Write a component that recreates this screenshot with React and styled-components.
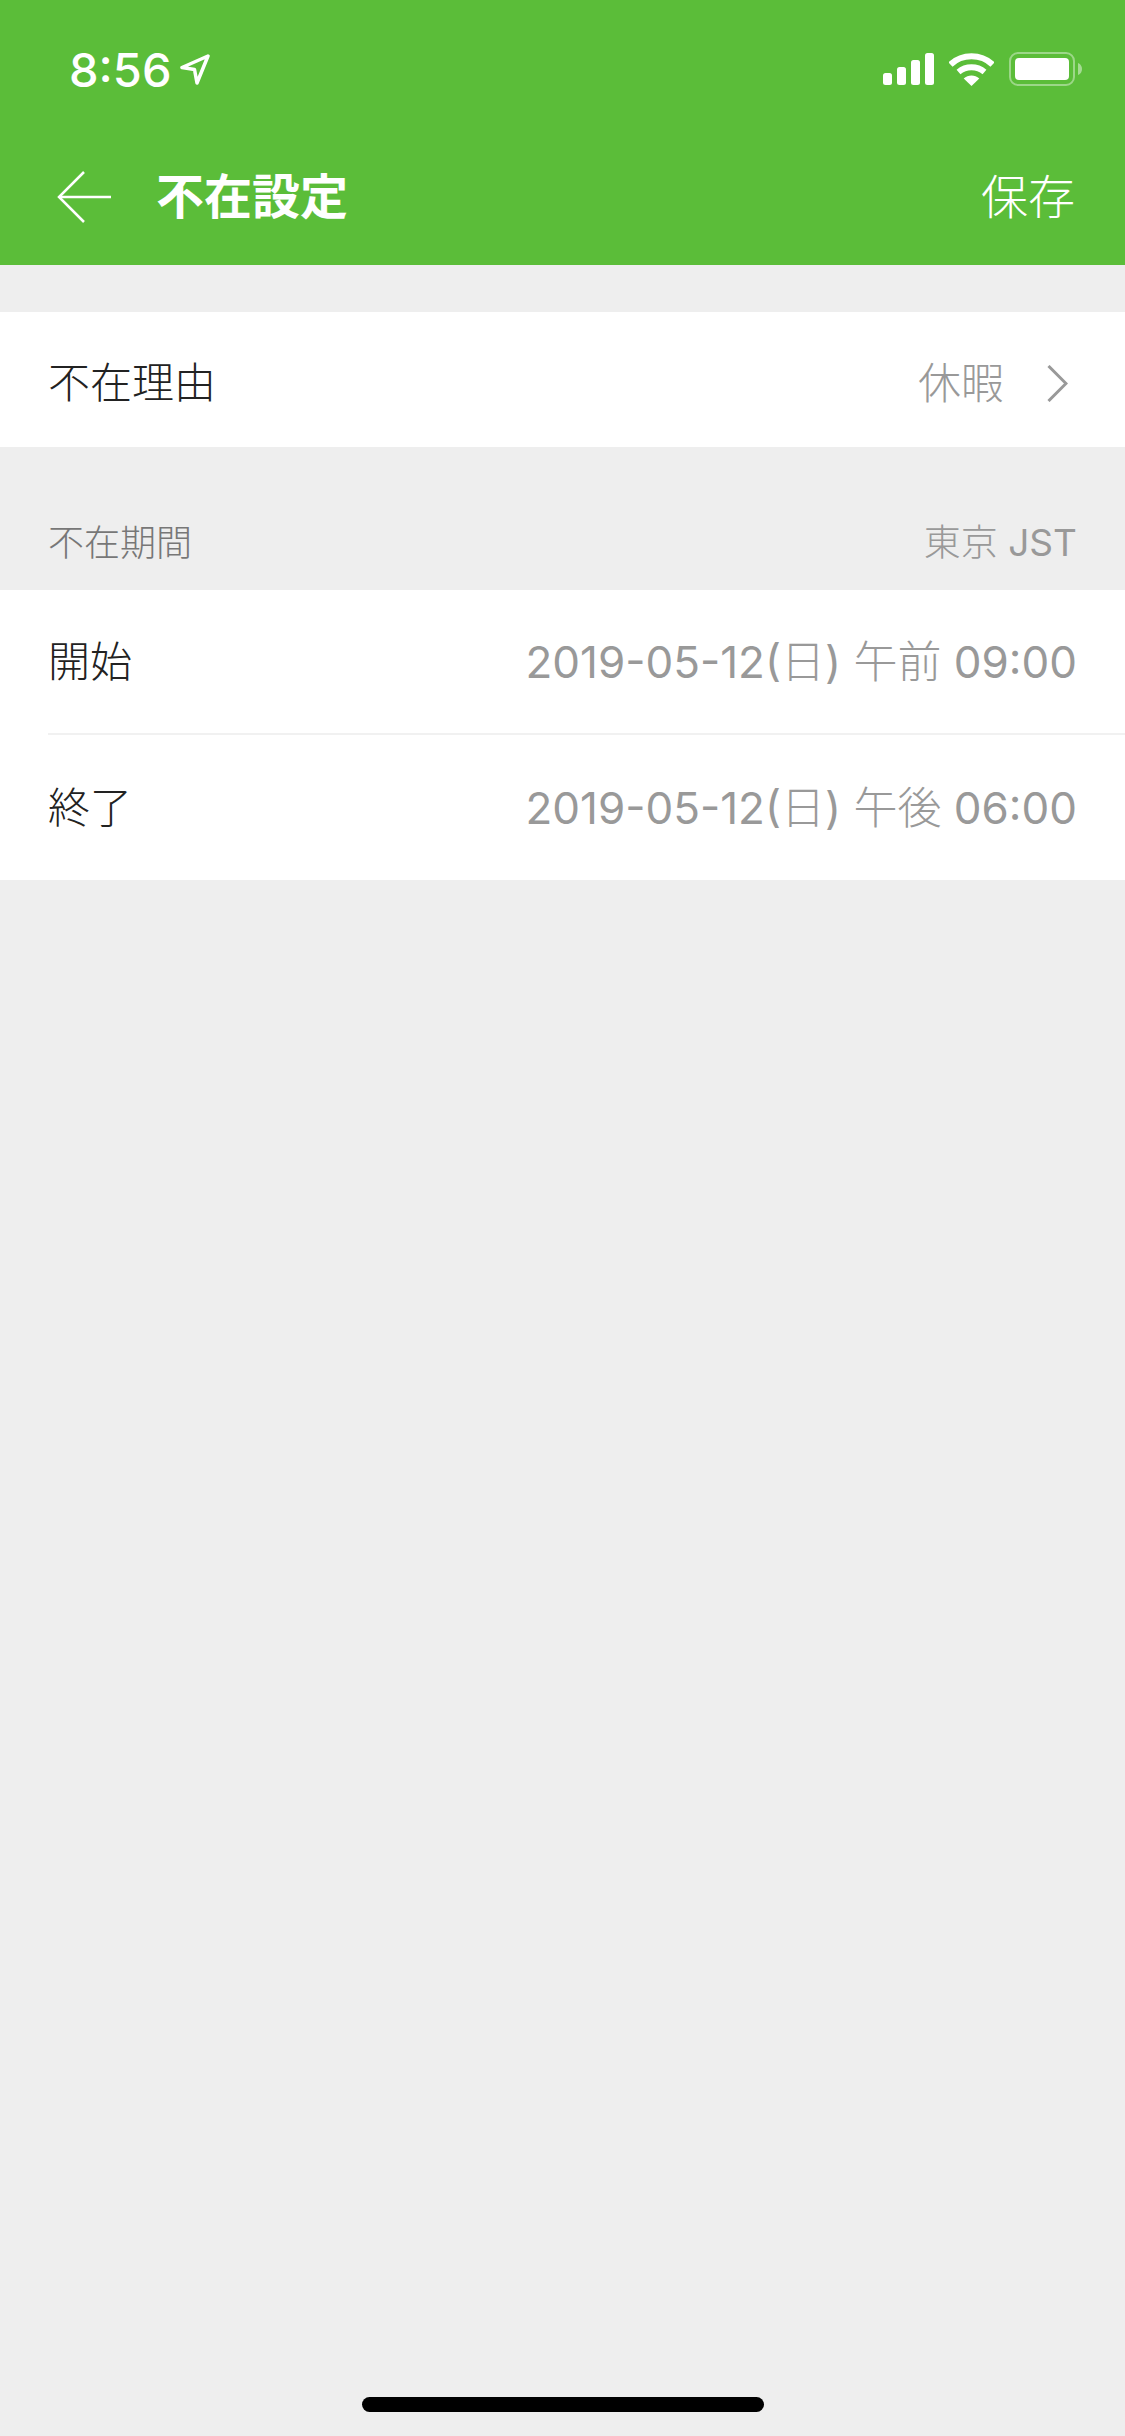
import React from 'react'
import styled, { createGlobalStyle } from 'styled-components'

const Global = createGlobalStyle`
  html, body { margin: 0; padding: 0; background: #eeeeee; }
  * { box-sizing: border-box; }
`

const cjk = `Inter, "Noto Sans CJK JP", sans-serif`

const Screen = styled.div`
  width: 1125px;
  height: 2436px;
  background: #eeeeee;
  display: flex;
  flex-direction: column;
  font-family: ${cjk};
  overflow: hidden;
`
const Header = styled.header`
  background: #5bbd39;
  height: 265px;
  color: #fff;
  display: flex;
  flex-direction: column;
`
const StatusBar = styled.div`
  height: 138px;
  display: flex;
  align-items: center;
  justify-content: space-between;
  padding: 0 43px 0 69px;
`
const Clock = styled.div`
  display: flex;
  align-items: center;
  gap: 8px;
  font-size: 47px;
  font-weight: 500;
  line-height: 1;
`
const StatusIcons = styled.div`
  display: flex;
  align-items: center;
  gap: 15px;
`
const NavBar = styled.div`
  flex: 1;
  display: flex;
  align-items: center;
  padding: 0 50px 10px 57px;
`
const NavTitle = styled.h1`
  margin: 0 0 0 45px;
  flex: 1;
  font-size: 48px;
  font-weight: 700;
  line-height: 1;
`
const SaveButton = styled.span`
  font-size: 47px;
  font-weight: 300;
  line-height: 1;
`
const ReasonGroup = styled.section`
  margin-top: 47px;
  background: #fff;
`
const SectionHead = styled.div`
  height: 143px;
  display: flex;
  align-items: flex-end;
  justify-content: space-between;
  padding: 0 48px 25px 48px;
  line-height: 44px;
`
const SectionTitle = styled.span`
  font-size: 36px;
  font-weight: 300;
  color: #777;
`
const ZoneLabel = styled.span`
  font-size: 37px;
  font-weight: 400;
  color: #999;
`
const DateGroup = styled.section`
  background: #fff;
`
const Row = styled.div`
  height: ${p => p.$h}px;
  margin-left: 48px;
  padding: 0 ${p => p.$pr}px ${p => p.$pb || 0}px 0;
  display: flex;
  align-items: center;
  justify-content: space-between;
  border-bottom: ${p => (p.$line ? '2px solid #f1f1f1' : 'none')};
`
const RowLabel = styled.span`
  font-size: 42px;
  font-weight: 300;
  color: #222;
`
const RowValue = styled.span`
  display: flex;
  align-items: center;
  gap: 43px;
  font-size: 43px;
  font-weight: 300;
  color: #999;
`
const DateValue = styled.span`
  font-size: 44px;
  font-weight: 400;
  color: #999;
`
const Thin = styled.span`
  font-weight: 300;
`
const ChevronIcon = styled.svg`
  margin-top: 8px;
`
const HomeBar = styled.div`
  position: absolute;
  left: 362px;
  top: 2397px;
  width: 402px;
  height: 15px;
  border-radius: 8px;
  background: #000;
`

const LocationArrow = () => (
  <svg width="30" height="31" viewBox="0 0 30 31" fill="none">
    <path d="M28 2 L2 13.5 L14.5 15.5 L17 29 Z" stroke="#fff" strokeWidth="3.5" strokeLinejoin="round" />
  </svg>
)

const Signal = () => (
  <svg width="51" height="32" viewBox="0 0 51 32" fill="#fff">
    <rect x="0" y="20" width="9" height="12" rx="2.5" />
    <rect x="14" y="14" width="9" height="18" rx="2.5" />
    <rect x="28" y="7" width="9" height="25" rx="2.5" />
    <rect x="42" y="0" width="9" height="32" rx="2.5" />
  </svg>
)

const Wifi = () => (
  <svg width="45" height="33" viewBox="0 0 45 33" fill="none">
    <path d="M1.5 11.5 C13 0.5 32 0.5 43.5 11.5" stroke="#fff" strokeWidth="6" strokeLinecap="butt" />
    <path d="M9.5 19 C17 12.7 28 12.7 35.5 19" stroke="#fff" strokeWidth="6" strokeLinecap="butt" />
    <path d="M22.5 33 L14.7 25.5 C19 21.6 26 21.6 30.3 25.5 Z" fill="#fff" />
  </svg>
)

const Battery = () => (
  <svg width="73" height="34" viewBox="0 0 73 34" fill="none">
    <rect x="1" y="1" width="64" height="32" rx="8" stroke="#fff" strokeOpacity="0.4" strokeWidth="2" />
    <rect x="6" y="6" width="54" height="22" rx="4" fill="#fff" />
    <path d="M69 11 C72 12 73 15 73 17 C73 19 72 22 69 23 Z" fill="#fff" fillOpacity="0.45" />
  </svg>
)

const BackArrow = () => (
  <svg width="54" height="52" viewBox="0 0 54 52" fill="none" stroke="#fff" strokeWidth="2.5">
    <path d="M27 1 L2 26 L27 51" />
    <path d="M2 26 H54" />
  </svg>
)

const Chevron = () => (
  <ChevronIcon width="21" height="37" viewBox="0 0 21 37" fill="none" stroke="#999" strokeWidth="3">
    <path d="M1.5 1 L19 18.5 L1.5 36" />
  </ChevronIcon>
)

export default function App() {
  return (
    <Screen>
      <Global />
      <Header>
        <StatusBar>
          <Clock>
            8:56
            <LocationArrow />
          </Clock>
          <StatusIcons>
            <Signal />
            <Wifi />
            <Battery />
          </StatusIcons>
        </StatusBar>
        <NavBar>
          <BackArrow />
          <NavTitle>不在設定</NavTitle>
          <SaveButton>保存</SaveButton>
        </NavBar>
      </Header>
      <ReasonGroup>
        <Row $h={135} $pr={57}>
          <RowLabel>不在理由</RowLabel>
          <RowValue>
            休暇
            <Chevron />
          </RowValue>
        </Row>
      </ReasonGroup>
      <SectionHead>
        <SectionTitle>不在期間</SectionTitle>
        <ZoneLabel><Thin>東京</Thin> JST</ZoneLabel>
      </SectionHead>
      <DateGroup>
        <Row $h={145} $pr={48} $pb={6} $line>
          <RowLabel>開始</RowLabel>
          <DateValue>2019-05-12(<Thin>日</Thin>) <Thin>午前</Thin> 09:00</DateValue>
        </Row>
        <Row $h={145} $pr={48} $pb={6}>
          <RowLabel>終了</RowLabel>
          <DateValue>2019-05-12(<Thin>日</Thin>) <Thin>午後</Thin> 06:00</DateValue>
        </Row>
      </DateGroup>
      <HomeBar />
    </Screen>
  )
}
